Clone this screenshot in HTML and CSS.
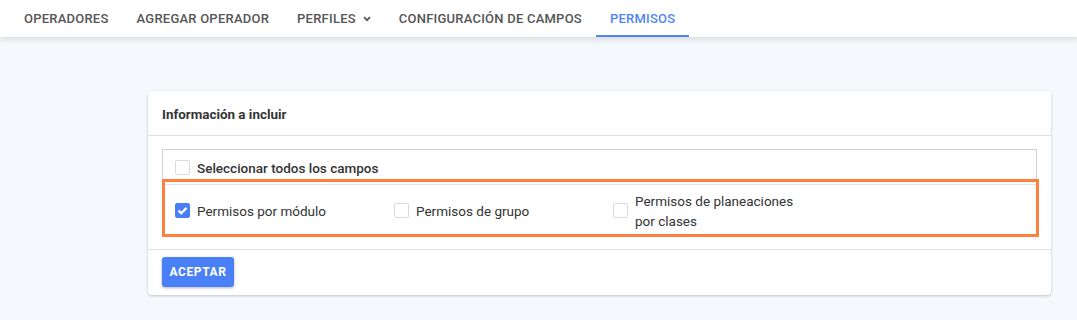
FILE: index.html
```html
<!DOCTYPE html>
<html lang="es">
<head>
<meta charset="utf-8">
<title>Permisos</title>
<link rel="stylesheet" href="styles.css">
</head>
<body>
<nav class="nav">
  <a class="tab">OPERADORES</a>
  <a class="tab">AGREGAR OPERADOR</a>
  <a class="tab">PERFILES
    <svg class="chev" width="8" height="6" viewBox="0 0 8 6"><path d="M1 1.2 L4 4.2 L7 1.2" fill="none" stroke="#555" stroke-width="1.8"/></svg>
  </a>
  <a class="tab">CONFIGURACIÓN DE CAMPOS</a>
  <a class="tab active">PERMISOS</a>
</nav>
<main class="main">
  <section class="card">
    <header class="card-head">Información a incluir</header>
    <div class="card-body">
      <div class="box">
        <div class="row row-all">
          <label class="check"><span class="cb"></span><span class="lbl strong">Seleccionar todos los campos</span></label>
        </div>
        <div class="row row-items">
          <label class="check item"><span class="cb on"><svg width="15" height="15" viewBox="0 0 15 15"><path d="M3.5 7.6 L6.2 10.2 L11.5 4.9" fill="none" stroke="#fff" stroke-width="2.3"/></svg></span><span class="lbl">Permisos por módulo</span></label>
          <label class="check item"><span class="cb"></span><span class="lbl">Permisos de grupo</span></label>
          <label class="check item"><span class="cb"></span><span class="lbl wrap">Permisos de planeaciones por clases</span></label>
        </div>
        <div class="highlight"></div>
      </div>
    </div>
    <footer class="card-foot">
      <button class="btn">ACEPTAR</button>
    </footer>
  </section>
</main>
</body>
</html>
```
FILE: styles.css
```css
* { box-sizing: border-box; }
html, body { margin: 0; padding: 0; }
body {
  background: #f5f9fd;
  font-family: Roboto, "Liberation Sans", sans-serif;
  color: #333;
  height: 320px;
  overflow: hidden;
}
.nav {
  height: 37px;
  background: #fff;
  display: flex;
  padding-left: 10px;
  box-shadow: 0 2px 7px rgba(0, 0, 0, 0.14);
  position: relative;
}
.tab {
  display: flex;
  align-items: center;
  gap: 7px;
  padding: 0 14px;
  font-size: 13px;
  font-weight: 500;
  color: #555;
  border-bottom: 2px solid transparent;
  padding-top: 2px;
  letter-spacing: 0.23px;
}
.tab.active {
  color: #4f86f7;
  border-bottom-color: #4f86f7;
}
.chev { margin-top: 1px; }
.main {
  padding: 54px 0 0 148px;
}
.card {
  width: 903px;
  background: #fff;
  border-radius: 4px;
  box-shadow: 0 1px 3px rgba(0, 0, 0, 0.22);
}
.card-head {
  height: 45px;
  display: flex;
  align-items: center;
  padding: 2px 14px 0;
  font-size: 13.4px;
  font-weight: 700;
  color: #333;
  border-bottom: 1px solid #e0e0e0;
}
.card-body {
  padding: 13px 14px 13px;
}
.box {
  position: relative;
  border: 1px solid #cdd0da;
}
.row {
  display: flex;
  align-items: center;
  padding: 0 12px;
}
.row-all { height: 34px; padding-top: 1px; }
.row-items {
  border-top: 1px solid #e3e3e3;
  padding-top: 6px;
  padding-bottom: 4px;
  min-height: 50px;
}
.check {
  display: flex;
  align-items: center;
  gap: 7px;
  font-size: 13.5px;
  line-height: 20px;
}
.item { width: 219px; }
.cb {
  width: 15px;
  height: 15px;
  flex: none;
  border: 1px solid #dadada;
  border-radius: 2px;
  background: #fff;
  display: flex;
}
.item .cb { margin-top: -1px; }
.cb.on {
  background: #4a80f7;
  border-color: #4a80f7;
}
.cb.on svg { margin: -1px; }
.lbl { color: #333; }
.lbl.strong { font-weight: 500; }
.lbl.wrap { width: 170px; }
.highlight {
  position: absolute;
  left: -1px;
  top: 29px;
  width: 877px;
  height: 58px;
  border: 3px solid #ff7f3f;
  pointer-events: none;
}
.card-foot {
  border-top: 1px solid #e0e0e0;
  padding: 7px 14px 8px;
}
.btn {
  width: 72px;
  height: 30px;
  border: 0;
  border-radius: 3px;
  background: #4a80f7;
  color: #fff;
  font-family: Roboto, "Liberation Sans", sans-serif;
  font-size: 12px;
  font-weight: 700;
  letter-spacing: 0.6px;
  box-shadow: 0 1px 3px rgba(0, 0, 0, 0.3);
  display: block;
}
```
